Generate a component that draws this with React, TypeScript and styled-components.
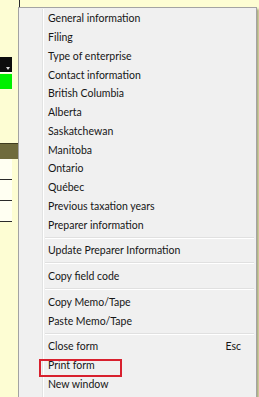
import styled, {createGlobalStyle} from "styled-components";

const GlobalStyle = createGlobalStyle`
  html, body {
    margin: 0;
    padding: 0;
    background: #fdfdd3;
  }
`

const Page = styled.div`
  position: relative;
  width: 259px;
  height: 397px;
  overflow: hidden;
  background: #fdfdd3;
  font-family: 'Lato', 'Open Sans', sans-serif;
`

const FormEdge = styled.div`
  display: flex;
  flex-direction: column;
  width: 60px;
`

const TopFrame = styled.div`
  width: 19px;
  height: 8px;
  border-right: 1px solid #2b2b2b;
`

const DropBox = styled.div`
  position: relative;
  margin-top: 49px;
  width: 12px;
  height: 15px;
  background: #0c0c0c;
  border-bottom: 1px solid #ffffff;

  &::after {
    content: '';
    position: absolute;
    left: 6px;
    bottom: 2px;
    border-left: 2px solid transparent;
    border-right: 2px solid transparent;
    border-top: 3px solid #d8d8d8;
  }
`

const GreenBar = styled.div`
  margin-top: 1px;
  width: 12px;
  height: 15px;
  background: #00f000;
`

const OliveBar = styled.div`
  margin-top: 54px;
  height: 15px;
  background: #6f6b3c;
  border-top: 1px solid #3f3c1f;
`

const LineBox = styled.div`
  width: 12px;
  height: 20px;
  background: #fffff2;
  border-bottom: 1px solid #2a2a2a;
`

const Menu = styled.div`
  position: absolute;
  left: 18px;
  top: 7px;
  width: 235px;
  height: 400px;
  padding: 1px;
  background: #f0f0f0;
  border: 1px solid #a3a3a3;
  box-shadow: 2px 2px 2px rgba(80, 76, 30, 0.45);
  display: flex;
  flex-direction: column;

  &::before {
    content: '';
    position: absolute;
    top: 1px;
    bottom: 0;
    left: 23px;
    width: 1px;
    background: #e2e3e3;
    box-shadow: 1px 0 0 #ffffff;
  }
`

const Item = styled.div<{ $marked?: boolean }>`
  position: relative;
  display: flex;
  align-items: center;
  justify-content: space-between;
  height: 18.75px;
  padding: 0 14px 0 28px;
  font-size: 10.5px;
  color: #161616;
  white-space: nowrap;

  &::after {
    content: '';
    display: ${(p) => (p.$marked ? 'block' : 'none')};
    position: absolute;
    left: 19px;
    top: 3.5px;
    width: 79px;
    height: 14px;
    border: 2px solid #d8202e;
  }
`

const Separator = styled.div`
  margin: 2.5px 1px 2.5px 25px;
  height: 1px;
  background: #e0e0e0;
  border-bottom: 1px solid #ffffff;
`

const Shortcut = styled.span`
  color: #161616;
`

const groups: { label: string; key?: string; marked?: boolean }[][] = [
    [
        {label: 'General information'},
        {label: 'Filing'},
        {label: 'Type of enterprise'},
        {label: 'Contact information'},
        {label: 'British Columbia'},
        {label: 'Alberta'},
        {label: 'Saskatchewan'},
        {label: 'Manitoba'},
        {label: 'Ontario'},
        {label: 'Québec'},
        {label: 'Previous taxation years'},
        {label: 'Preparer information'},
    ],
    [{label: 'Update Preparer Information'}],
    [{label: 'Copy field code'}],
    [{label: 'Copy Memo/Tape'}, {label: 'Paste Memo/Tape'}],
    [
        {label: 'Close form', key: 'Esc'},
        {label: 'Print form', marked: true},
        {label: 'New window'},
    ],
];

function App() {
    return (
        <>
            <GlobalStyle/>
            <Page>
                <FormEdge>
                    <TopFrame/>
                    <DropBox/>
                    <GreenBar/>
                    <OliveBar/>
                    <LineBox/>
                    <LineBox/>
                    <LineBox/>
                </FormEdge>

                <Menu>
                    {groups.map((group, gi) => (
                        <div key={gi}>
                            {gi > 0 && <Separator/>}
                            {group.map((item) => (
                                <Item key={item.label} $marked={item.marked}>
                                    <span>{item.label}</span>
                                    {item.key && <Shortcut>{item.key}</Shortcut>}
                                </Item>
                            ))}
                        </div>
                    ))}
                </Menu>
            </Page>
        </>
    );
}

export default App;
